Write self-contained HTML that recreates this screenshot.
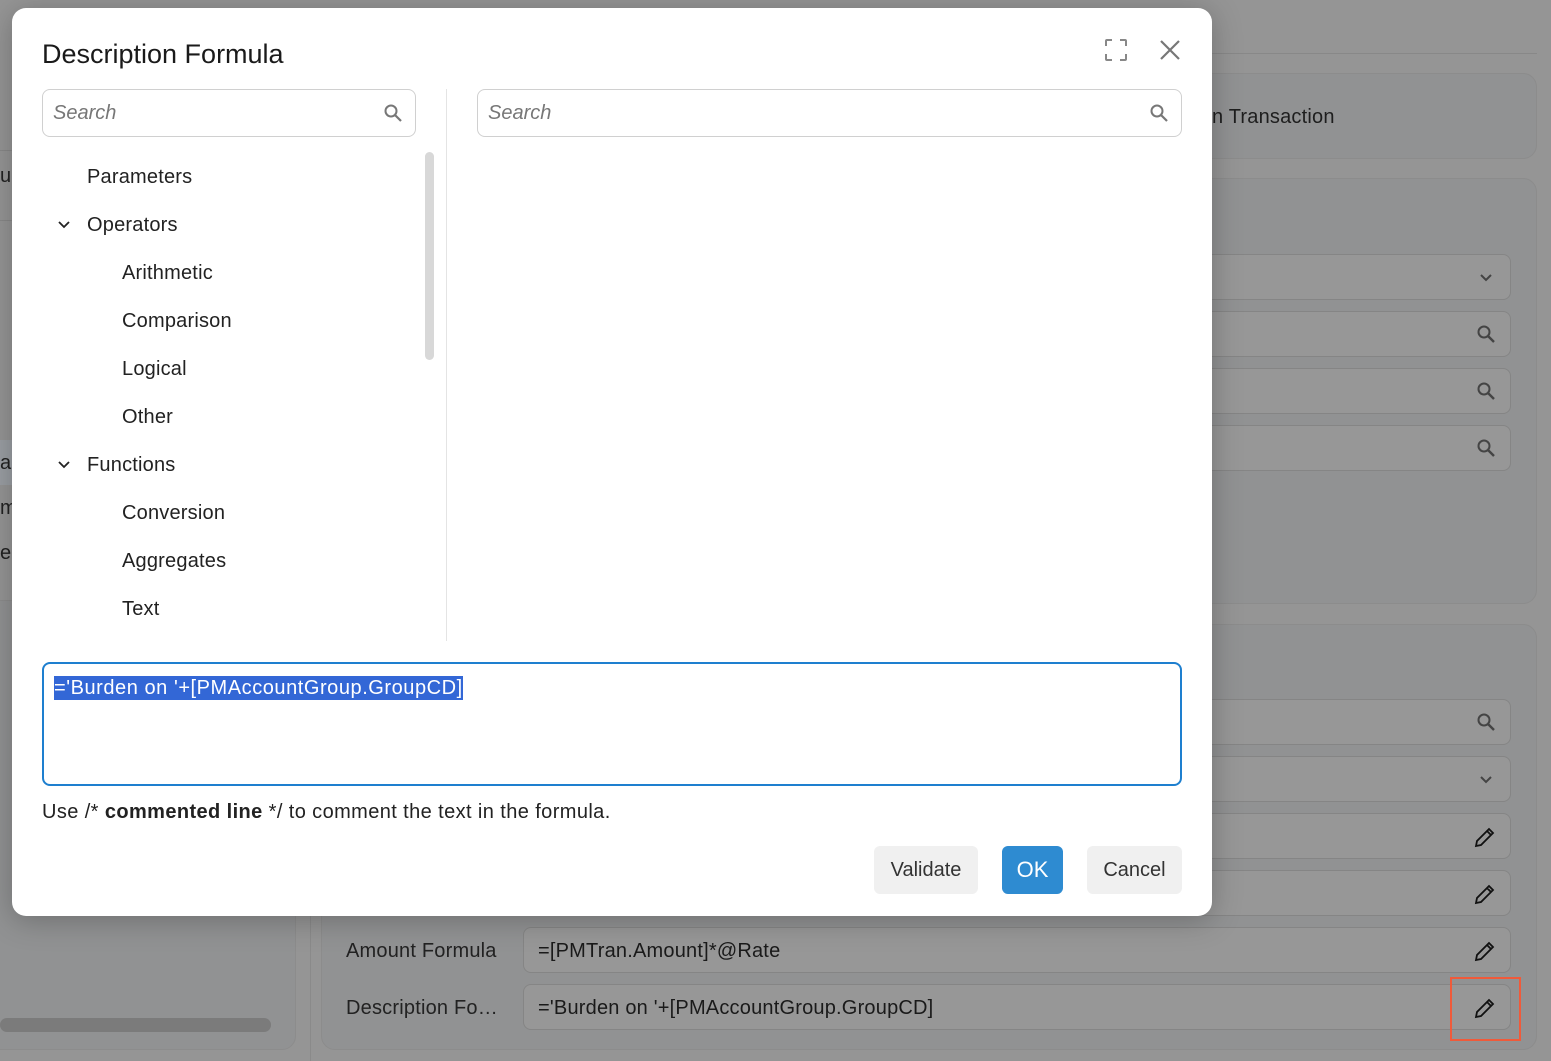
<!DOCTYPE html>
<html><head><meta charset="utf-8"><style>
*{box-sizing:border-box;margin:0;padding:0}
body{width:1551px;height:1061px;overflow:hidden;background:#959595;font-family:"Liberation Sans",Arial,sans-serif;position:relative;color:#222}
.abs{position:absolute}
.card{position:absolute;background:#919293;border:1px solid #8c8c8c;border-radius:14px}
.fld{position:absolute;left:523px;width:988px;height:46px;border:1px solid #858585;border-radius:8px;background:#979797;font-size:20px;color:#1a1a1a;padding:12px 14px;letter-spacing:0.2px}
.ic{position:absolute;right:14px;top:12px}
.lbl{position:absolute;left:346px;font-size:20px;color:#222;letter-spacing:0.2px}
.modal{position:absolute;left:12px;top:8px;width:1200px;height:908px;background:#fff;border-radius:14px;box-shadow:0 4px 30px rgba(0,0,0,.25)}
.search{position:absolute;height:48px;border:1px solid #d0d0d0;border-radius:8px;font-size:20px;font-style:italic;color:#777;padding:12px 10px}
.tree{position:absolute;font-size:20px;color:#222;letter-spacing:0.2px}
.btn{position:absolute;top:838px;height:48px;border-radius:6px;font-size:20px;text-align:center;line-height:48px;background:#f0f0f0;color:#333}
</style></head><body>
<div class="abs" style="left:1212px;top:53px;width:325px;height:1px;background:#888"></div>
<div class="card" style="left:1100px;top:73px;width:437px;height:86px"></div>
<div class="abs" style="left:1212px;top:106px;font-size:20px;color:#1e1e1e;letter-spacing:0.2px">n Transaction</div>
<div class="card" style="left:1100px;top:178px;width:437px;height:426px"></div>
<div class="card" style="left:-20px;top:600px;width:316px;height:450px"></div>
<div class="abs" style="left:310px;top:600px;width:1px;height:461px;background:#8a8a8a"></div>
<div class="card" style="left:321px;top:624px;width:1216px;height:426px"></div>
<div class="abs" style="left:0;top:1018px;width:271px;height:14px;border-radius:7px;background:#7b7b7b"></div>
<div class="abs" style="left:0;top:150px;width:12px;height:1px;background:#888"></div>
<div class="abs" style="left:0;top:220px;width:12px;height:1px;background:#888"></div>
<div class="abs" style="left:0;top:440px;width:12px;height:45px;background:#9a9ea3"></div>
<div class="abs" style="left:0;top:165px;font-size:20px">ur</div>
<div class="abs" style="left:0;top:452px;font-size:20px">a</div>
<div class="abs" style="left:0;top:497px;font-size:20px">m</div>
<div class="abs" style="left:0;top:542px;font-size:20px">er</div>

<div class="fld" style="top:254px"><svg class="ic" width="20" height="20" viewBox="0 0 20 20"><path d="M5 8l5 5 5-5" fill="none" stroke="#444" stroke-width="2"/></svg></div>
<div class="fld" style="top:311px"><svg class="ic" width="20" height="20" viewBox="0 0 20 20"><circle cx="8" cy="8" r="5.5" fill="none" stroke="#444" stroke-width="2"/><path d="M12 12l6 6" stroke="#444" stroke-width="2.4"/></svg></div>
<div class="fld" style="top:368px"><svg class="ic" width="20" height="20" viewBox="0 0 20 20"><circle cx="8" cy="8" r="5.5" fill="none" stroke="#444" stroke-width="2"/><path d="M12 12l6 6" stroke="#444" stroke-width="2.4"/></svg></div>
<div class="fld" style="top:425px"><svg class="ic" width="20" height="20" viewBox="0 0 20 20"><circle cx="8" cy="8" r="5.5" fill="none" stroke="#444" stroke-width="2"/><path d="M12 12l6 6" stroke="#444" stroke-width="2.4"/></svg></div>

<div class="fld" style="top:699px"><svg class="ic" width="20" height="20" viewBox="0 0 20 20"><circle cx="8" cy="8" r="5.5" fill="none" stroke="#444" stroke-width="2"/><path d="M12 12l6 6" stroke="#444" stroke-width="2.4"/></svg></div>
<div class="fld" style="top:756px"><svg class="ic" width="20" height="20" viewBox="0 0 20 20"><path d="M5 8l5 5 5-5" fill="none" stroke="#444" stroke-width="2"/></svg></div>
<div class="fld" style="top:813px"><svg class="ic" width="22" height="22" viewBox="0 0 22 22"><path d="M2 20l1-5L15 3l4 4L7 19z M13 5l4 4" fill="none" stroke="#111" stroke-width="1.8"/></svg></div>
<div class="fld" style="top:870px"><svg class="ic" width="22" height="22" viewBox="0 0 22 22"><path d="M2 20l1-5L15 3l4 4L7 19z M13 5l4 4" fill="none" stroke="#111" stroke-width="1.8"/></svg></div>
<div class="lbl" style="top:940px">Amount Formula</div>
<div class="fld" style="top:927px">=[PMTran.Amount]*@Rate<svg class="ic" width="22" height="22" viewBox="0 0 22 22"><path d="M2 20l1-5L15 3l4 4L7 19z M13 5l4 4" fill="none" stroke="#111" stroke-width="1.8"/></svg></div>
<div class="lbl" style="top:997px">Description Fo…</div>
<div class="fld" style="top:984px">='Burden on '+[PMAccountGroup.GroupCD]<svg class="ic" width="22" height="22" viewBox="0 0 22 22"><path d="M2 20l1-5L15 3l4 4L7 19z M13 5l4 4" fill="none" stroke="#111" stroke-width="1.8"/></svg></div>
<div class="abs" style="left:1450px;top:977px;width:71px;height:64px;border:2px solid #f05a3a"></div>

<div class="modal">
  <div class="abs" style="left:30px;top:31px;font-size:27px;color:#1a1a1a">Description Formula</div>
  <svg class="abs" style="left:1092px;top:30px" width="24" height="24" viewBox="0 0 24 24"><path d="M2 8V3a1 1 0 0 1 1-1h5M16 2h5a1 1 0 0 1 1 1v5M22 16v5a1 1 0 0 1-1 1h-5M8 22H3a1 1 0 0 1-1-1v-5" fill="none" stroke="#888" stroke-width="2"/></svg>
  <svg class="abs" style="left:1147px;top:31px" width="22" height="22" viewBox="0 0 22 22"><path d="M2 2l18 18M20 2L2 20" stroke="#777" stroke-width="2.2"/></svg>
  <div class="search" style="left:30px;top:81px;width:374px">Search<svg class="abs" style="right:12px;top:13px" width="20" height="20" viewBox="0 0 20 20"><circle cx="8" cy="8" r="5.5" fill="none" stroke="#777" stroke-width="2"/><path d="M12 12l6 6" stroke="#777" stroke-width="2.2"/></svg></div>
  <div class="search" style="left:465px;top:81px;width:705px">Search<svg class="abs" style="right:12px;top:13px" width="20" height="20" viewBox="0 0 20 20"><circle cx="8" cy="8" r="5.5" fill="none" stroke="#777" stroke-width="2"/><path d="M12 12l6 6" stroke="#777" stroke-width="2.2"/></svg></div>
  <div class="abs" style="left:413px;top:144px;width:9px;height:208px;border-radius:5px;background:#d8d8d8"></div>
  <div class="abs" style="left:434px;top:81px;width:1px;height:552px;background:#e4e4e4"></div>
  <div class="tree" style="left:75px;top:158px">Parameters</div>
  <svg class="abs" style="left:45px;top:210px" width="14" height="14" viewBox="0 0 14 14"><path d="M2 4l5 5 5-5" fill="none" stroke="#222" stroke-width="1.8"/></svg>
  <div class="tree" style="left:75px;top:206px">Operators</div>
  <div class="tree" style="left:110px;top:254px">Arithmetic</div>
  <div class="tree" style="left:110px;top:302px">Comparison</div>
  <div class="tree" style="left:110px;top:350px">Logical</div>
  <div class="tree" style="left:110px;top:398px">Other</div>
  <svg class="abs" style="left:45px;top:450px" width="14" height="14" viewBox="0 0 14 14"><path d="M2 4l5 5 5-5" fill="none" stroke="#222" stroke-width="1.8"/></svg>
  <div class="tree" style="left:75px;top:446px">Functions</div>
  <div class="tree" style="left:110px;top:494px">Conversion</div>
  <div class="tree" style="left:110px;top:542px">Aggregates</div>
  <div class="tree" style="left:110px;top:590px">Text</div>
  <div class="abs" style="left:30px;top:654px;width:1140px;height:124px;border:2px solid #1e7fcf;border-radius:8px"></div>
  <div class="abs" style="left:42px;top:668px;font-size:20px;line-height:24px;background:#3367d6;color:#fff;letter-spacing:0.55px">='Burden on '+[PMAccountGroup.GroupCD]</div>
  <div class="abs" style="left:30px;top:793px;font-size:20px;color:#222;letter-spacing:0.4px">Use /* <b>commented line</b> */ to comment the text in the formula.</div>
  <div class="btn" style="left:862px;width:104px">Validate</div>
  <div class="btn" style="left:990px;width:61px;background:#2e8bd1;color:#fff;font-size:22px">OK</div>
  <div class="btn" style="left:1075px;width:95px">Cancel</div>
</div>
</body></html>
